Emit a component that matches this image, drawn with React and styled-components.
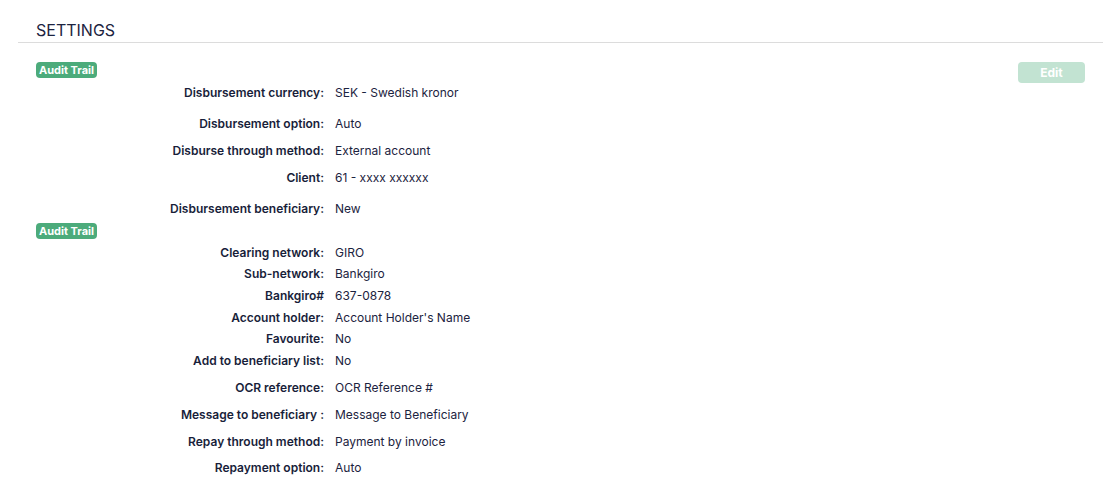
import React from 'react';
import styled, { createGlobalStyle } from 'styled-components';

const GlobalStyle = createGlobalStyle`
  body {
    margin: 0;
    background: #ffffff;
    font-family: Inter, "Noto Sans", sans-serif;
    color: #1c2340;
  }
`

const Page = styled.div`
  padding: 0 17px 0 18px;
`

const Header = styled.div`
  height: 43px;
  display: flex;
  align-items: flex-end;
  padding: 0 0 1px 18px;
  box-sizing: border-box;
  border-bottom: 1px solid #dcdcdc;
`

const Title = styled.h2`
  margin: 0;
  font-size: 16px;
  font-weight: 400;
  color: #1c2340;
  line-height: 22px;
`

const Body = styled.div`
  padding: 19px 18px 0 18px;
`

const TopBar = styled.div`
  display: flex;
  justify-content: space-between;
  align-items: flex-start;
  height: 20px;
`

const Badge = styled.span`
  display: inline-block;
  background: #4cab7b;
  color: #ffffff;
  font-size: 11px;
  font-weight: 700;
  line-height: 16px;
  padding: 0 3px;
  border-radius: 4px;
`

const EditButton = styled.button`
  width: 67px;
  height: 21px;
  border: none;
  border-radius: 4px;
  background: #c2e3d2;
  color: #ffffff;
  font-family: Inter, sans-serif;
  font-size: 12px;
  font-weight: 700;
  padding: 0;
`

const Row = styled.div`
  display: grid;
  grid-template-columns: 288px 1fr;
  column-gap: 11px;
  font-size: 12px;
  line-height: 21px;
  margin-top: ${p => p.gap}px;
`

const Label = styled.div`
  text-align: right;
  font-weight: 600;
  color: #181e3a;
  white-space: nowrap;
`

const Value = styled.div`
  white-space: nowrap;
`

const BadgeRow = styled.div`
  height: 16px;
  margin: 0 0 7px;
`

const first = [
  ['Disbursement currency:', 'SEK - Swedish kronor', 0],
  ['Disbursement option:', 'Auto', 10],
  ['Disburse through method:', 'External account', 6],
  ['Client:', '61 - xxxx xxxxxx', 6],
  ['Disbursement beneficiary:', 'New', 10],
]

const second = [
  ['Clearing network:', 'GIRO', 0],
  ['Sub-network:', 'Bankgiro', 0],
  ['Bankgiro#', '637-0878', 1],
  ['Account holder:', "Account Holder's Name", 1],
  ['Favourite:', 'No', 0],
  ['Add to beneficiary list:', 'No', 1],
  ['OCR reference:', 'OCR Reference #', 6],
  ['Message to beneficiary :', 'Message to Beneficiary', 6],
  ['Repay through method:', 'Payment by invoice', 6],
  ['Repayment option:', 'Auto', 5],
]

const Rows = ({ items }) => items.map(([label, value, gap]) => (
  <Row key={label} gap={gap}>
    <Label>{label}</Label>
    <Value>{value}</Value>
  </Row>
))

export default function App() {
  return (
    <Page>
      <GlobalStyle />
      <Header>
        <Title>SETTINGS</Title>
      </Header>
      <Body>
        <TopBar>
          <Badge>Audit Trail</Badge>
          <EditButton>Edit</EditButton>
        </TopBar>
        <Rows items={first} />
        <BadgeRow><Badge>Audit Trail</Badge></BadgeRow>
        <Rows items={second} />
      </Body>
    </Page>
  )
}
